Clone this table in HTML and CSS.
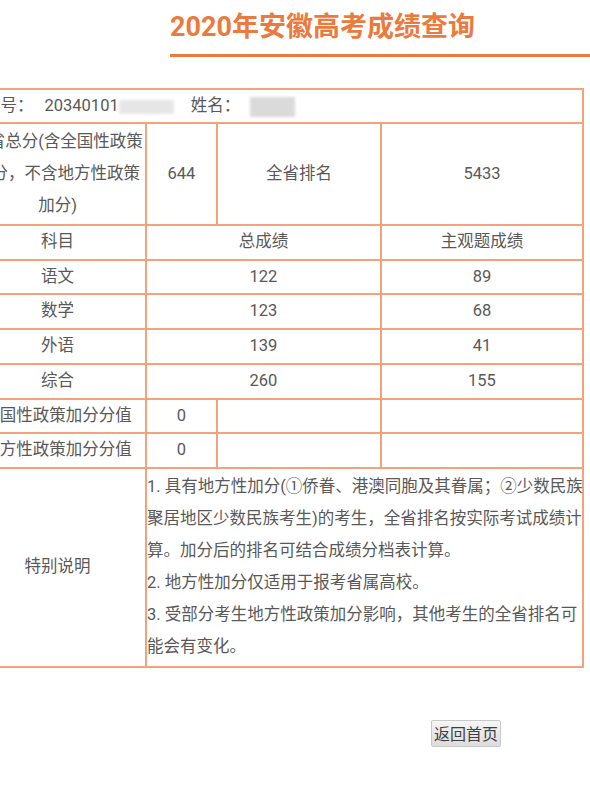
FILE: index.html
```html
<!DOCTYPE html>
<html lang="zh-CN">
<head>
<meta charset="utf-8">
<title>2020年安徽高考成绩查询</title>
<link rel="stylesheet" href="styles.css">
</head>
<body>
<div class="page">
  <h1 class="title">2020年安徽高考成绩查询</h1>
  <table class="score">
    <colgroup>
      <col class="c1"><col class="c2"><col class="c3"><col class="c4">
    </colgroup>
    <tr class="row-info">
      <td colspan="4" class="info">考号：<span class="num">20340101</span><span class="mask mask-id"></span><span class="name-lbl">姓名：</span><span class="mask mask-name"></span></td>
    </tr>
    <tr class="row-total">
      <td>全省总分(含全国性政策加分，不含地方性政策加分)</td>
      <td>644</td>
      <td>全省排名</td>
      <td>5433</td>
    </tr>
    <tr class="row">
      <td>科目</td><td colspan="2">总成绩</td><td>主观题成绩</td>
    </tr>
    <tr class="row">
      <td>语文</td><td colspan="2">122</td><td>89</td>
    </tr>
    <tr class="row">
      <td>数学</td><td colspan="2">123</td><td>68</td>
    </tr>
    <tr class="row">
      <td>外语</td><td colspan="2">139</td><td>41</td>
    </tr>
    <tr class="row">
      <td>综合</td><td colspan="2">260</td><td>155</td>
    </tr>
    <tr class="row">
      <td>全国性政策加分分值</td><td>0</td><td></td><td></td>
    </tr>
    <tr class="row">
      <td>地方性政策加分分值</td><td>0</td><td></td><td></td>
    </tr>
    <tr class="row-note">
      <td>特别说明</td>
      <td colspan="3" class="note">1. 具有地方性加分(①侨眷、港澳同胞及其眷属；②少数民族<br>聚居地区少数民族考生)的考生，全省排名按实际考试成绩计<br>算。加分后的排名可结合成绩分档表计算。<br>2. 地方性加分仅适用于报考省属高校。<br>3. 受部分考生地方性政策加分影响，其他考生的全省排名可<br>能会有变化。</td>
    </tr>
  </table>
  <div class="actions">
    <button class="back" type="button">返回首页</button>
  </div>
</div>
</body>
</html>
```
FILE: styles.css
```css
html, body {
  margin: 0;
  padding: 0;
  background: #ffffff;
  overflow: hidden;
}

body {
  font-family: "Roboto", "Noto Sans CJK SC", sans-serif;
  color: #5a5a5a;
}

.page {
  width: 590px;
}

.title {
  margin: 0 0 0 170px;
  padding: 9px 0 9px 0;
  font-size: 27px;
  line-height: 36px;
  font-weight: 700;
  color: #ec7a3c;
  border-bottom: 3px solid #ec7a3c;
  white-space: nowrap;
}

.score {
  margin: 31px 0 0 -32px;
  width: 616px;
  border-collapse: collapse;
  table-layout: fixed;
  font-size: 16.5px;
  color: #595959;
}

.c1 { width: 177px; }
.c2 { width: 71px; }
.c3 { width: 164px; }
.c4 { width: 202px; }

.score td {
  border: 2px solid #f3a27c;
  padding: 0;
  text-align: center;
  vertical-align: middle;
}

.row-info td {
  line-height: 32px;
}

.info {
  text-align: left !important;
  padding-left: 14px !important;
  white-space: nowrap;
}

.num {
  margin-left: 11px;
}

.mask {
  display: inline-block;
  vertical-align: middle;
  filter: blur(1.5px);
}

.mask-id {
  width: 55px;
  height: 14px;
  background: #e6e6e6;
  margin-right: 17px;
}

.mask-name {
  width: 45px;
  height: 20px;
  background: #dadada;
  margin-left: 10px;
}

.row-total td {
  line-height: 32px;
  padding: 2px 0;
}

.row td {
  line-height: 32.7px;
}

.row-note td {
  line-height: 32px;
  padding: 2.5px 0;
}

.score .note {
  text-align: left;
  white-space: nowrap;
  overflow: visible;
}

.actions {
  margin-top: 52px;
  padding-left: 431px;
}

.back {
  font-family: "Noto Sans CJK SC", sans-serif;
  font-size: 16px;
  line-height: 21px;
  padding: 2px 2px;
  color: #3f3f3f;
  background: linear-gradient(#f6f6f6, #dcdcdc);
  border: 1px solid #c9c9c9;
  border-radius: 2px;
}
```
